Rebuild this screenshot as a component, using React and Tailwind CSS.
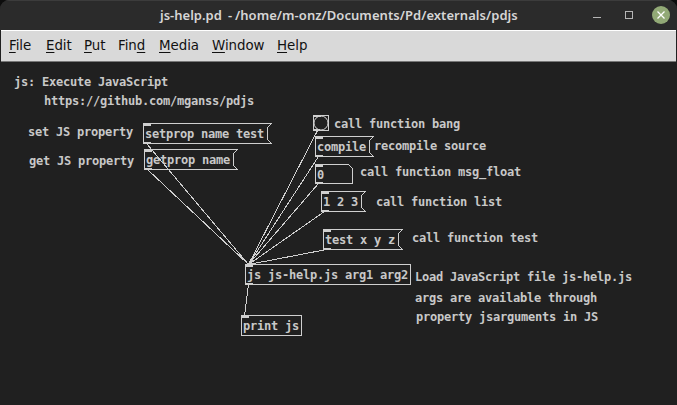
const menus = [
  { pre: '', key: 'F', post: 'ile', box: 'w-[37px]' },
  { pre: '', key: 'E', post: 'dit', box: 'w-[38px]' },
  { pre: '', key: 'P', post: 'ut', box: 'w-[34px]' },
  { pre: 'Fin', key: 'd', post: '', box: 'w-[41px]' },
  { pre: '', key: 'M', post: 'edia', box: 'w-[53px]' },
  { pre: '', key: 'W', post: 'indow', box: 'w-[65px]' },
  { pre: '', key: 'H', post: 'elp', box: 'w-[40px]' },
];

// Positions on the patch canvas, measured from its top left corner.
const texts = [
  ['js: Execute JavaScript', 'left-[14px] top-[13px]'],
  ['https://github.com/mganss/pdjs', 'left-[44px] top-[32px]'],
  ['set JS property', 'left-[28px] top-[63px]'],
  ['get JS property', 'left-[29px] top-[92px]'],
  ['setprop name test', 'left-[145px] top-[65px]'],
  ['getprop name', 'left-[146px] top-[91px]'],
  ['call function bang', 'left-[334px] top-[55px]'],
  ['compile', 'left-[317px] top-[78px]'],
  ['recompile source', 'left-[374px] top-[77px]'],
  ['0', 'left-[317px] top-[106px]'],
  ['call function msg_float', 'left-[360px] top-[103px]'],
  ['1 2 3', 'left-[323px] top-[133px]'],
  ['call function list', 'left-[376px] top-[133px]'],
  ['test x y z', 'left-[325px] top-[171px]'],
  ['call function test', 'left-[412px] top-[169px]'],
  ['js js-help.js arg1 arg2', 'left-[247px] top-[206px]'],
  ['Load JavaScript file js-help.js', 'left-[415px] top-[208px]'],
  ['args are available through', 'left-[415px] top-[229px]'],
  ['property jsarguments in JS', 'left-[416px] top-[248px]'],
  ['print js', 'left-[243px] top-[257px]'],
];

const messages = [
  [143, 61, 271, 81],
  [144, 87, 237, 107],
  [315, 74, 373, 94],
  [321, 129, 365, 149],
  [323, 167, 402, 187],
];

const cords = [
  [146, 81, 248, 202],
  [147, 107, 248, 202],
  [317, 68, 248, 202],
  [318, 94, 248, 202],
  [318, 121, 248, 202],
  [324, 149, 248, 202],
  [326, 187, 248, 202],
  [248, 222, 244, 253],
];

function Outline({ box }) {
  const [l, t, r, b] = box;
  return (
    <path d={`M${l} ${t}H${r}L${r - 4} ${t + 4}V${b - 4}L${r} ${b}H${l}Z`} />
  );
}

function Ports({ box, outlet = true }) {
  const [l, t, , b] = box;
  return (
    <g fill="#cfcfcf" stroke="none">
      <rect x={l - 0.5} y={t - 0.5} width="8" height="3" />
      {outlet && <rect x={l - 0.5} y={b - 1.5} width="8" height="2" />}
    </g>
  );
}

function Wires() {
  return (
    <svg width="677" height="343" className="absolute left-0 top-0" fill="none" stroke="#cfcfcf" strokeWidth="1" shapeRendering="crispEdges">
      <g transform="translate(.5 .5)">
        {messages.map((box) => (
          <g key={box.join()}>
            <Outline box={box} />
            <Ports box={box} />
          </g>
        ))}
        <rect x="313" y="53" width="15" height="15" />
        <circle cx="320.5" cy="60.5" r="7" shapeRendering="auto" />
        <path d="M313 54H320M313 67H319" />
        <path d="M315 102H348L352 106V121H315Z" />
        <Ports box={[315, 102, 352, 121]} />
        <rect x="245" y="202" width="165" height="20" />
        <Ports box={[245, 202, 410, 222]} />
        <rect x="241" y="253" width="60" height="20" />
        <Ports box={[241, 253, 301, 273]} outlet={false} />
        {cords.map(([x1, y1, x2, y2]) => (
          <line key={`${x1}-${y1}`} x1={x1} y1={y1} x2={x2} y2={y2} />
        ))}
      </g>
    </svg>
  );
}

export default function App() {
  return (
    <div className="h-[405px] w-[677px] overflow-hidden bg-[#0d0d0d]">
      <div className="flex h-full flex-col overflow-hidden rounded-t-[9px] bg-[#202020]">
        <header className="flex h-[30px] shrink-0 items-center border-t border-[#3c3c3c] bg-[#2b2b2b]">
          <h1 className="ml-[160px] flex w-[428px] whitespace-pre pb-px font-['Noto_Sans'] text-[13px] font-semibold leading-[18px] text-[#d6d6d6]">
            <span className="w-[68px]">js-help.pd</span>
            <span className="w-[7px]">-</span>
            <span className="tracking-[0.05px]">/home/m-onz/Documents/Pd/externals/pdjs</span>
          </h1>
          <svg width="89" height="29" className="shrink-0" fill="none" stroke="#b5b5b5">
            <path d="M5 16.5H13" />
            <rect x="37.5" y="10.5" width="7" height="7" />
            <circle cx="73" cy="14" r="9" fill="#92a976" stroke="none" />
            <path d="M69.5 10.5L76.5 17.5M76.5 10.5L69.5 17.5" stroke="#fff" strokeWidth="1.3" />
          </svg>
        </header>
        <nav className="mx-px flex h-8 shrink-0 border-b border-t border-b-[#777] border-t-white bg-[#d9d9d9] pl-2 pt-[6px] font-['DejaVu_Sans'] text-[13.4px] leading-[18px] tracking-[-0.05px] text-[#111]">
          {menus.map(({ pre, key, post, box }) => (
            <div key={pre + key + post} className={`${box} shrink-0`}>
              {pre}
              <span className="underline decoration-1 underline-offset-[2px]">{key}</span>
              {post}
            </div>
          ))}
        </nav>
        <main className="relative flex-1 font-['DejaVu_Sans_Mono'] text-[12px] font-bold leading-[14px] tracking-[-0.224px] text-[#c8c8c8]">
          {texts.map(([text, place]) => (
            <div key={text} className={`absolute whitespace-pre ${place}`}>{text}</div>
          ))}
          <Wires />
        </main>
      </div>
    </div>
  );
}
